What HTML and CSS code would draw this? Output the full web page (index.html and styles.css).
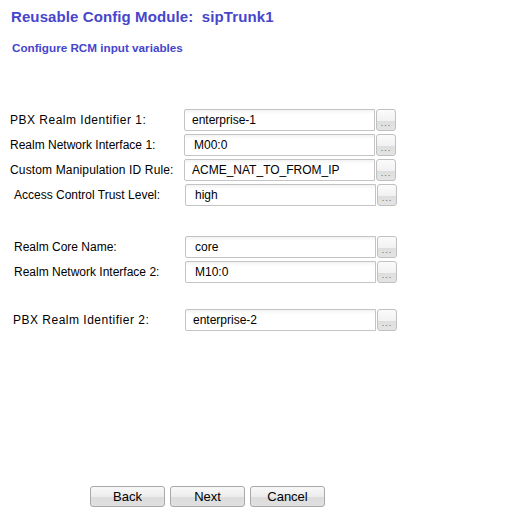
FILE: index.html
```html
<!DOCTYPE html>
<html>
<head>
    <link rel="stylesheet" href="styles.css">
</head>
<body>
    <div class="page">
        <h1 class="title">Reusable Config Module:&nbsp; sipTrunk1</h1>
        <h2 class="subtitle">Configure RCM input variables</h2>

        <div class="group first">
            <div class="row">
                <label class="label wide">PBX Realm Identifier 1:</label>
                <input class="field" type="text" value="enterprise-1">
                <button class="pick">...</button>
            </div>
            <div class="row">
                <label class="label">Realm Network Interface 1:</label>
                <input class="field shift" type="text" value="M00:0">
                <button class="pick">...</button>
            </div>
            <div class="row">
                <label class="label loose">Custom Manipulation ID Rule:</label>
                <input class="field" type="text" value="ACME_NAT_TO_FROM_IP">
                <button class="pick">...</button>
            </div>
            <div class="row">
                <label class="label indent">Access Control Trust Level:</label>
                <input class="field shift" type="text" value="high">
                <button class="pick">...</button>
            </div>
        </div>

        <div class="group second">
            <div class="row">
                <label class="label indent">Realm Core Name:</label>
                <input class="field shift" type="text" value="core">
                <button class="pick">...</button>
            </div>
            <div class="row">
                <label class="label indent">Realm Network Interface 2:</label>
                <input class="field shift" type="text" value="M10:0">
                <button class="pick">...</button>
            </div>
        </div>

        <div class="group third">
            <div class="row">
                <label class="label mid wide">PBX Realm Identifier 2:</label>
                <input class="field" type="text" value="enterprise-2">
                <button class="pick">...</button>
            </div>
        </div>

        <div class="actions">
            <button class="nav">Back</button>
            <button class="nav">Next</button>
            <button class="nav">Cancel</button>
        </div>
    </div>
</body>
</html>
```

FILE: styles.css
```css
body {
    margin: 0;
    font-family: "Liberation Sans", Arial, sans-serif;
    font-size: 12px;
    color: #000;
    background: #fff;
}
.page {
    width: 517px;
    height: 518px;
    padding: 8px 0 0 11px;
    box-sizing: border-box;
}
.title {
    margin: 0;
    font-size: 15px;
    font-weight: bold;
    color: #4646cc;
    line-height: 18px;
    letter-spacing: 0.1px;
}
.subtitle {
    margin: 14px 0 0 1px;
    font-size: 11.7px;
    font-weight: bold;
    color: #4646cc;
    line-height: 15px;
}
.group {
    display: flex;
    flex-direction: column;
    gap: 3px;
}
.group.first {
    margin-top: 54px;
}
.group.second {
    margin-top: 30px;
}
.group.third {
    margin-top: 26px;
}
.row {
    display: flex;
    align-items: center;
    height: 22px;
}
.label {
    width: 174px;
    margin-left: -1px;
    line-height: 14px;
}
.label.wide {
    letter-spacing: 0.5px;
}
.label.loose {
    letter-spacing: 0.15px;
}
.label.indent {
    margin-left: 3px;
    width: 171px;
}
.label.mid {
    margin-left: 2px;
    width: 172px;
}
.field {
    width: 191px;
    height: 22px;
    box-sizing: border-box;
    margin: 0;
    padding: 0 0 0 7px;
    border: 1px solid #c4c4c4;
    border-radius: 2px 0 0 2px;
    background: linear-gradient(#f2f2f2, #fff 4px);
    font-family: "Liberation Sans", Arial, sans-serif;
    font-size: 12px;
    color: #000;
    outline: none;
}
.field.shift {
    padding-left: 9px;
}
.pick {
    width: 20px;
    height: 22px;
    margin: 0 0 0 1px;
    padding: 5px 0 0;
    box-sizing: border-box;
    border: 1px solid #c0c0c0;
    border-radius: 3px;
    background: linear-gradient(#fbfbfb 0, #f1f1f1 55%, #dedede 56%, #e4e4e4 100%);
    font-family: "Liberation Sans", Arial, sans-serif;
    font-size: 9px;
    line-height: 14px;
    color: #666;
    letter-spacing: 1px;
}
.actions {
    display: flex;
    gap: 5px;
    margin: 155px 0 0 79px;
}
.nav {
    width: 75px;
    height: 21px;
    margin: 0;
    padding: 0;
    box-sizing: border-box;
    border: 1px solid #a8a8a8;
    border-radius: 3px;
    background: linear-gradient(#f8f8f8 0, #ececec 50%, #dcdcdc 51%, #e0e0e0 100%);
    font-family: "Liberation Sans", Arial, sans-serif;
    font-size: 13px;
    color: #000;
}
```
